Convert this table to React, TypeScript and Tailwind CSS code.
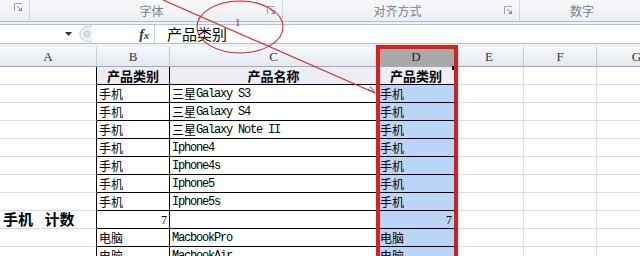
import React from 'react';

const cjk = "font-['SimSun','Noto_Sans_CJK_SC',sans-serif]";
const mono = "font-['Liberation_Mono','Noto_Sans_CJK_SC',monospace]";
const serif = "font-['Liberation_Serif','Noto_Sans_CJK_SC',serif]";

type Row = {
  a?: string;
  b: string;
  cn?: string;
  en?: string;
  c?: string;
  d: string;
  head?: boolean;
  num?: boolean;
};

const rows: Row[] = [
  { head: true, b: '产品类别', c: '产品名称', d: '产品类别' },
  { b: '手机', cn: '三星', en: 'Galaxy S3', d: '手机' },
  { b: '手机', cn: '三星', en: 'Galaxy S4', d: '手机' },
  { b: '手机', cn: '三星', en: 'Galaxy Note II', d: '手机' },
  { b: '手机', en: 'Iphone4', d: '手机' },
  { b: '手机', en: 'Iphone4s', d: '手机' },
  { b: '手机', en: 'Iphone5', d: '手机' },
  { b: '手机', en: 'Iphone5s', d: '手机' },
  { a: '手机 计数', b: '7', d: '7', num: true },
  { b: '电脑', en: 'MacbookPro', d: '电脑' },
  { b: '电脑', en: 'MacbookAir', d: '电脑' },
];

function Launcher() {
  return (
    <svg width="9" height="9" viewBox="0 0 9 9" className="shrink-0">
      <path d="M0.5 8V0.5H8" fill="none" stroke="#9aa3ae" />
      <path d="M3 3L7.5 7.5M7.5 4.5V7.5H4.5" fill="none" stroke="#7d8794" />
    </svg>
  );
}

function Ribbon() {
  return (
    <div className="flex h-[22px] bg-gradient-to-b from-[#f7f8fa] to-[#eceff3] border-b border-[#b4bcc7] text-[12px] text-[#7a828d]">
      <div className="flex w-[30px] shrink-0 items-start justify-end border-r border-[#d3d8de] pr-[6px] pt-[3px]">
        <Launcher />
      </div>
      <div className="flex w-[253px] shrink-0 items-center border-r border-[#d3d8de] pr-[6px]">
        <span className={`flex-1 pl-[6px] text-center ${cjk}`}>字体</span>
        <Launcher />
      </div>
      <div className="flex w-[237px] shrink-0 items-center border-r border-[#d3d8de] pr-[6px]">
        <span className={`flex-1 pl-[8px] text-center ${cjk}`}>对齐方式</span>
        <Launcher />
      </div>
      <div className="flex flex-1 items-center">
        <span className={`pl-[50px] ${cjk}`}>数字</span>
      </div>
    </div>
  );
}

function FormulaBar() {
  return (
    <div className="bg-[#eef1f5] pt-[2px] pb-[3px]">
      <div className="flex h-[20px] border-y border-[#b9c1cb] bg-white">
        <div className="flex w-[75px] shrink-0 items-center justify-end pr-[3px]">
          <svg width="7" height="4" viewBox="0 0 7 4">
            <path d="M0 0H7L3.5 4Z" fill="#333" />
          </svg>
        </div>
        <div className="flex w-[22px] shrink-0 items-center pl-[4px]">
          <svg width="14" height="18" viewBox="0 0 14 18">
            <path d="M13 1C5 1 1 5 1 9s4 8 12 8" fill="#f1f2f4" stroke="#c7ccd2" />
            <circle cx="8" cy="9" r="3" fill="#dfe2e6" stroke="#c3c8ce" />
          </svg>
        </div>
        <div className="flex w-[58px] shrink-0 items-center justify-end border-r border-[#c9cfd6] pr-[5px]">
          <span className={`italic font-bold text-[14px] text-[#333] ${serif}`}>
            f<span className="text-[10px]">x</span>
          </span>
        </div>
        <div className={`flex flex-1 items-center pl-[12px] text-[15px] text-black ${cjk}`}>产品类别</div>
      </div>
    </div>
  );
}

function ColumnHeaders() {
  const head = `flex shrink-0 items-center justify-center border-r border-[#c5ccd5] text-[13px] text-[#2f3640] ${serif}`;
  const light = 'bg-gradient-to-b from-[#f7f9fb] to-[#e4e9ef]';
  return (
    <div className="flex h-[20px] border-b border-[#9eabba]">
      <div className={`${head} ${light} w-[97px]`}>A</div>
      <div className={`${head} ${light} w-[73px]`}>B</div>
      <div className={`${head} ${light} w-[208px]`}>C</div>
      <div className={`${head} w-[77px] bg-[#a9a9a9] text-[#222]`}>D</div>
      <div className={`${head} ${light} w-[69px]`}>E</div>
      <div className={`${head} ${light} w-[73px]`}>F</div>
      <div className={`${head} ${light} w-[80px]`}>G</div>
    </div>
  );
}

function DataRow({ row }: { row: Row }) {
  const grid = 'shrink-0 border-r border-b border-[#d9dcdf]';
  const boxed = 'flex shrink-0 items-center border-r border-b border-black px-[2px] text-[12px] text-black';
  const headCell = `justify-center bg-[#ededf3] font-bold text-[13px] ${cjk}`;
  return (
    <div className="flex h-[18px]">
      <div className="flex w-[97px] shrink-0 items-center border-r border-b border-r-black border-b-[#d9dcdf] pl-[3px]">
        {row.a && (
          <span className={`font-bold text-[15px] text-black [word-spacing:8px] ${cjk}`}>{row.a}</span>
        )}
      </div>
      <div className={`${boxed} w-[73px] ${row.head ? headCell : row.num ? `justify-end ${serif}` : cjk}`}>
        {row.b}
      </div>
      <div className={`${boxed} w-[208px] ${row.head ? headCell : ''}`}>
        {row.head ? (
          row.c
        ) : (
          <>
            {row.cn && <span className={`text-[12px] ${cjk}`}>{row.cn}</span>}
            {row.en && <span className={`tracking-[-1.2px] ${mono}`}>{row.en}</span>}
          </>
        )}
      </div>
      <div
        className={`${boxed} relative w-[77px] ${
          row.head ? headCell : row.num ? `justify-end bg-[#bad6f6] ${serif}` : `bg-[#bad6f6] ${cjk}`
        }`}
      >
        {row.d}
        {row.head && <span className="absolute right-[-2px] top-[-1px] h-[4px] w-[4px] bg-black" />}
      </div>
      <div className={`${grid} w-[69px]`} />
      <div className={`${grid} w-[73px]`} />
      <div className={`${grid} w-[80px]`} />
    </div>
  );
}

function Markup() {
  return (
    <svg className="pointer-events-none absolute inset-0" width="640" height="256" viewBox="0 0 640 256">
      <line x1="163" y1="0" x2="375" y2="93" stroke="#c8283c" strokeWidth="1.1" />
      <path d="M368 89L375 93L370 86" fill="none" stroke="#c8283c" strokeWidth="1" />
      <ellipse cx="240" cy="27" rx="43" ry="26" fill="none" stroke="#c8283c" strokeWidth="1.1" />
      <text x="235" y="26" fontSize="11" fill="#c8283c" fontFamily="Liberation Serif, serif">
        1
      </text>
      <rect x="378" y="47" width="78" height="230" fill="none" stroke="#e01b1b" strokeWidth="4" />
    </svg>
  );
}

export default function App() {
  return (
    <div className="relative h-[256px] w-[640px] overflow-hidden bg-white">
      <Ribbon />
      <FormulaBar />
      <ColumnHeaders />
      {rows.map((row, i) => (
        <DataRow key={i} row={row} />
      ))}
      <Markup />
    </div>
  );
}
